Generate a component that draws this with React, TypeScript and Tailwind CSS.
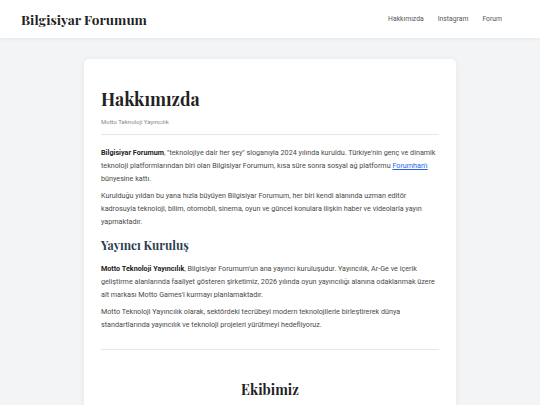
export default function App() {
  const serif = { fontFamily: '"Playfair Display", "DejaVu Serif", serif' };
  return (
    <div className="min-h-screen bg-[#f3f4f6]" style={{ fontFamily: 'Roboto, "Liberation Sans", sans-serif' }}>
      {/* Header */}
      <header className="flex h-[38px] items-center justify-between bg-white pl-[21px] pr-[38px] shadow-[0_1px_4px_rgba(0,0,0,0.06)]">
        <div className="text-[13.6px] font-bold text-[#222]" style={serif}>
          Bilgisiyar Forumum
        </div>
        <nav className="flex items-center gap-[14px] text-[6.8px] text-[#555]">
          <a>Hakkımızda</a>
          <a>Instagram</a>
          <a>Forum</a>
        </nav>
      </header>

      {/* Card */}
      <main className="mx-auto mt-[21px] w-[372px] rounded-[5px] bg-white px-[17px] pt-[28px] pb-8 shadow-[0_1px_6px_rgba(0,0,0,0.06)]">
        <h1 className="text-[17.7px] font-bold leading-[24px] text-[#222]" style={serif}>
          Hakkımızda
        </h1>
        <p className="mt-[6px] text-[6px] text-[#888]">Motto Teknoloji Yayıncılık</p>
        <hr className="mt-[8px] border-[#e5e7eb]" />

        <div className="mt-[11px] text-[7.2px] leading-[13px] text-[#4a4a4a]">
          <p>
            <b className="text-[#222]">Bilgisiyar Forumum</b>, "teknolojiye dair her şey" sloganıyla 2024 yılında kuruldu. Türkiye'nin genç ve dinamik teknoloji platformlarından biri olan Bilgisiyar Forumum, kısa süre sonra sosyal ağ platformu{' '}
            <a className="text-[#2563eb] underline">Forumhan'ı</a> bünyesine kattı.
          </p>
          <p className="mt-[4px]">
            Kurulduğu yıldan bu yana hızla büyüyen Bilgisiyar Forumum, her biri kendi alanında uzman editör kadrosuyla teknoloji, bilim, otomobil, sinema, oyun ve güncel konulara ilişkin haber ve videolarla yayın yapmaktadır.
          </p>

          <h2 className="mt-[8px] mb-[8px] text-[12px] font-bold leading-[18px] text-[#2c3e50]" style={serif}>
            Yayıncı Kuruluş
          </h2>
          <p>
            <b className="text-[#222]">Motto Teknoloji Yayıncılık</b>, Bilgisiyar Forumum'un ana yayıncı kuruluşudur. Yayıncılık, Ar-Ge ve içerik geliştirme alanlarında faaliyet gösteren şirketimiz, 2026 yılında oyun yayıncılığı alanına odaklanmak üzere alt markası Motto Games'i kurmayı planlamaktadır.
          </p>
          <p className="mt-[4px]">
            Motto Teknoloji Yayıncılık olarak, sektördeki tecrübeyi modern teknolojilerle birleştirerek dünya standartlarında yayıncılık ve teknoloji projeleri yürütmeyi hedefliyoruz.
          </p>
        </div>

        <hr className="mt-[18px] border-[#e5e7eb]" />

        <h2 className="mt-[30px] text-center text-[14px] font-bold leading-[20px] text-[#222]" style={serif}>
          Ekibimiz
        </h2>
      </main>
    </div>
  );
}
